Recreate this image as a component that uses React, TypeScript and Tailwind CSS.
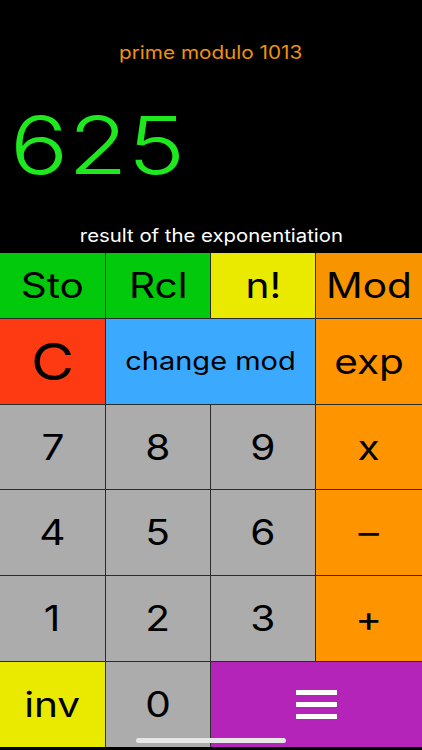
import React from "react";

type Key = { label: React.ReactNode; bg: string; cls?: string; span?: string };

function Hamburger() {
  return (
    <div className="flex flex-col gap-[7px]">
      <div className="w-[41px] h-[5px] bg-white" />
      <div className="w-[41px] h-[5px] bg-white" />
      <div className="w-[41px] h-[5px] bg-white" />
    </div>
  );
}

function Wide({ children }: { children: React.ReactNode }) {
  return <span className="inline-block scale-x-[1.16]">{children}</span>;
}

const big = "text-[35px]";
const digit = "text-[35px]";

export default function App() {
  const keys: Key[] = [
    { label: <Wide>Sto</Wide>, bg: "bg-[#03c90c]", cls: big },
    { label: <Wide>Rcl</Wide>, bg: "bg-[#03c90c]", cls: big },
    { label: <Wide>n!</Wide>, bg: "bg-[#eaea00]", cls: big },
    { label: <Wide>Mod</Wide>, bg: "bg-[#f79400]", cls: big },
    { label: <Wide>C</Wide>, bg: "bg-[#fe3a12]", cls: "text-[51px]" },
    { label: <Wide>change mod</Wide>, bg: "bg-[#3aa9fe]", cls: "text-[25px]", span: "col-span-2" },
    { label: <Wide>exp</Wide>, bg: "bg-[#fe9500]", cls: big },
    { label: <Wide>7</Wide>, bg: "bg-[#acacac]", cls: digit },
    { label: <Wide>8</Wide>, bg: "bg-[#acacac]", cls: digit },
    { label: <Wide>9</Wide>, bg: "bg-[#acacac]", cls: digit },
    { label: <Wide>x</Wide>, bg: "bg-[#fe9500]", cls: digit },
    { label: <Wide>4</Wide>, bg: "bg-[#acacac]", cls: digit },
    { label: <Wide>5</Wide>, bg: "bg-[#acacac]", cls: digit },
    { label: <Wide>6</Wide>, bg: "bg-[#acacac]", cls: digit },
    { label: <Wide>–</Wide>, bg: "bg-[#fe9500]", cls: digit },
    { label: <Wide>1</Wide>, bg: "bg-[#acacac]", cls: digit },
    { label: <Wide>2</Wide>, bg: "bg-[#acacac]", cls: digit },
    { label: <Wide>3</Wide>, bg: "bg-[#acacac]", cls: digit },
    { label: <Wide>+</Wide>, bg: "bg-[#fe9500]", cls: digit },
    { label: <Wide>inv</Wide>, bg: "bg-[#eaea00]", cls: big },
    { label: <Wide>0</Wide>, bg: "bg-[#acacac]", cls: digit },
    { label: <Hamburger />, bg: "bg-[#b524b8]", span: "col-span-2" },
  ];

  return (
    <div
      className="relative w-[422px] h-[750px] bg-black flex flex-col overflow-hidden"
      style={{ fontFamily: "Inter, 'Noto Sans', sans-serif" }}
    >
      <div className="h-[253px] flex flex-col">
        <div className="h-[41px]" />
        <div className="h-[22px] flex items-center justify-center text-[#f0920f] text-[18px]">
          <span className="inline-block scale-x-[1.15]">prime modulo 1013</span>
        </div>
        <div className="h-[42px]" />
        <div className="h-[80px] flex items-center pl-[10px] text-[#1ee81e] text-[80px] font-light leading-none">
          <span className="inline-block origin-left scale-x-[1.21]">625</span>
        </div>
        <div className="flex-1" />
        <div className="h-[26px] flex items-center justify-center text-white text-[18px]">
          <span className="inline-block scale-x-[1.13]">result of the exponentiation</span>
        </div>
        <div className="h-[5px]" />
      </div>
      <div className="grid grid-cols-[105px_104px_104px_106px] grid-rows-[65px_85px_84px_85px_85px_85px] gap-px bg-[#2b2b2b]">
        {keys.map((k, i) => (
          <div
            key={i}
            className={`${k.bg} ${k.span ?? ""} ${k.cls ?? ""} flex items-center justify-center text-black leading-none`}
          >
            {k.label}
          </div>
        ))}
      </div>
      <div className="absolute left-[136px] top-[738px] w-[150px] h-[5px] rounded-full bg-[#e6e6e6]" />
    </div>
  );
}
